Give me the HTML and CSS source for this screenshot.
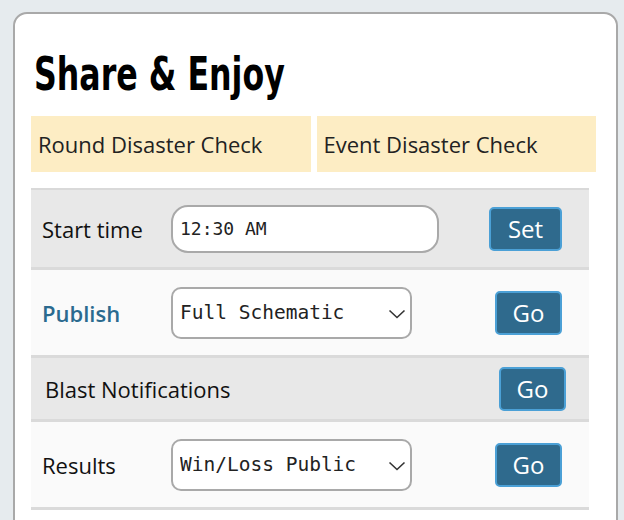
FILE: index.html
```html
<!DOCTYPE html>
<html lang="en">
<head>
<meta charset="utf-8">
<title>Share &amp; Enjoy</title>
<link rel="stylesheet" href="styles.css">
</head>
<body>
<div class="card">
  <h1 class="title"><span class="title-text">Share &amp; Enjoy</span></h1>
  <div class="checks">
    <div class="check">Round Disaster Check</div>
    <div class="check">Event Disaster Check</div>
  </div>
  <div class="table">
    <div class="row row-gray row-first">
      <div class="label">Start time</div>
      <div class="control"><input class="time" type="text" value="12:30 AM"></div>
      <div class="action"><button class="btn btn-set">Set</button></div>
    </div>
    <div class="row row-light">
      <div class="label label-link">Publish</div>
      <div class="control">
        <div class="select-wrap">
          <select class="select"><option>Full Schematic</option></select>
          <svg class="chev" width="18" height="10" viewBox="0 0 18 10"><path d="M1.5 1.5 L9 8.5 L16.5 1.5" fill="none" stroke="#333" stroke-width="1.6"/></svg>
        </div>
      </div>
      <div class="action"><button class="btn">Go</button></div>
    </div>
    <div class="row row-gray row-short">
      <div class="label label-wide">Blast Notifications</div>
      <div class="action action-shift"><button class="btn">Go</button></div>
    </div>
    <div class="row row-light">
      <div class="label">Results</div>
      <div class="control">
        <div class="select-wrap">
          <select class="select"><option>Win/Loss Public</option></select>
          <svg class="chev" width="18" height="10" viewBox="0 0 18 10"><path d="M1.5 1.5 L9 8.5 L16.5 1.5" fill="none" stroke="#333" stroke-width="1.6"/></svg>
        </div>
      </div>
      <div class="action"><button class="btn">Go</button></div>
    </div>
  </div>
</div>
</body>
</html>
```
FILE: styles.css
```css
html, body {
  margin: 0;
  padding: 0;
}
body {
  background: #e6ebee;
  padding: 12px 6px 0 13px;
  height: 520px;
  box-sizing: border-box;
  overflow: hidden;
  font-family: "Open Sans", "Noto Sans", sans-serif;
  color: #111;
}
.card {
  background: #fff;
  border: 2px solid #a9a9a9;
  border-radius: 14px;
  padding: 34px 20px 40px 16px;
  min-height: 560px;
  box-sizing: border-box;
}
.title {
  margin: 0 0 16px 3px;
  font-family: "DejaVu Sans Condensed", "DejaVu Sans", sans-serif;
  font-stretch: condensed;
  font-weight: bold;
  font-size: 46px;
  line-height: 52px;
  color: #000;
  white-space: nowrap;
}
.title-text {
  display: inline-block;
  transform: scaleX(0.765);
  transform-origin: 0 50%;
}
.checks {
  display: grid;
  grid-template-columns: 1fr 1fr;
  gap: 6px;
}
.check {
  background: #fdedc4;
  height: 56px;
  display: flex;
  align-items: center;
  padding-left: 7px;
  font-size: 22px;
  color: #222;
}
.table {
  margin-top: 16px;
  width: 558px;
  border-top: 2px solid #d9d9d9;
}
.row {
  display: flex;
  align-items: center;
  border-bottom: 3px solid #dadada;
  height: 88px;
  box-sizing: border-box;
}
.row-first { height: 80px; }
.row-short { height: 64px; }
.row-gray { background: #e8e8e8; }
.row-light { background: #fafafa; }
.label {
  width: 140px;
  padding-left: 11px;
  box-sizing: border-box;
  font-size: 22px;
  flex: none;
}
.label-link {
  color: #2b6a8f;
  font-weight: 600;
}
.label-wide {
  flex: 1;
  padding-left: 14px;
}
.control {
  flex: 1;
}
.action {
  flex: none;
  padding-right: 27px;
}
.action-shift {
  padding-right: 23px;
}
.time {
  width: 268px;
  height: 48px;
  box-sizing: border-box;
  border: 2px solid #a9a9a9;
  border-radius: 17px;
  padding: 0 0 0 7px;
  font-family: "DejaVu Sans Mono", monospace;
  font-size: 18px;
  color: #222;
  background: #fff;
  outline: none;
}
.select-wrap {
  position: relative;
  width: 241px;
}
.select {
  -webkit-appearance: none;
  appearance: none;
  width: 241px;
  height: 52px;
  box-sizing: border-box;
  border: 2px solid #a9a9a9;
  border-radius: 10px;
  padding: 0 0 0 7px;
  font-family: "DejaVu Sans Mono", monospace;
  font-size: 19.5px;
  color: #222;
  background: #fff;
  display: block;
}
.chev {
  position: absolute;
  right: 6px;
  top: 22px;
  pointer-events: none;
}
.btn {
  height: 44px;
  width: 67px;
  box-sizing: border-box;
  background: #2f6a8d;
  border: 2px solid #4ba0d6;
  border-radius: 5px;
  color: #fff;
  font-family: "Open Sans", "Noto Sans", sans-serif;
  font-size: 24px;
  padding: 0;
  line-height: 1;
}
.btn-set {
  width: 73px;
}
```
